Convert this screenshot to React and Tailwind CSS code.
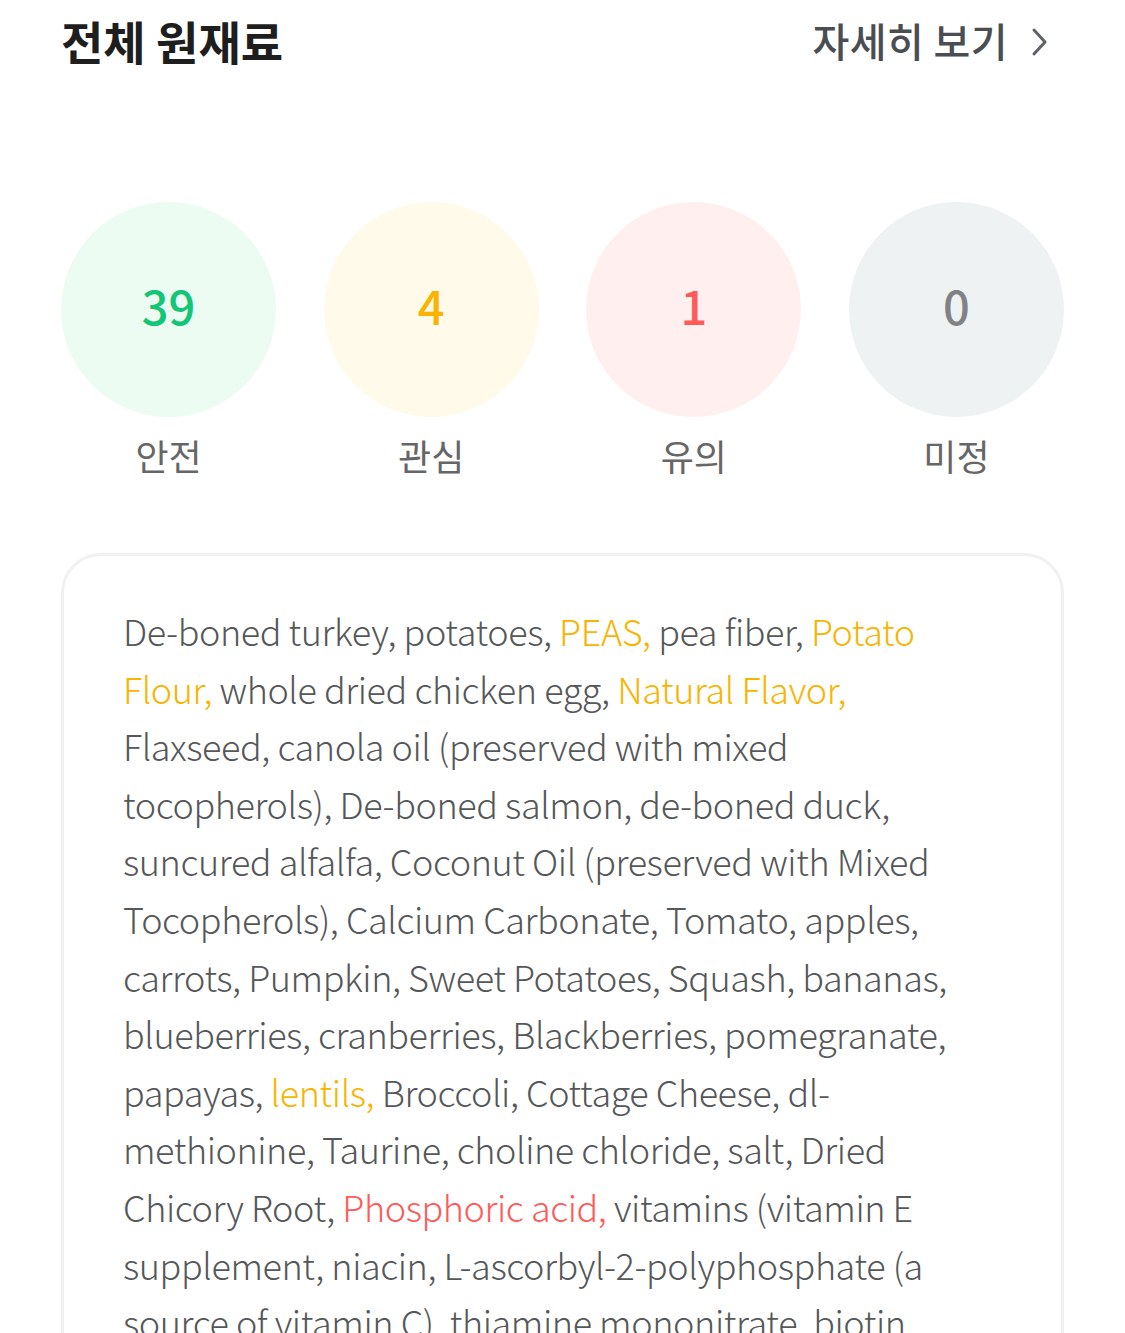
const stats = [
  { count: 39, label: "안전", bg: "bg-[#edfcf3]", fg: "text-[#12c676]" },
  { count: 4, label: "관심", bg: "bg-[#fffaea]", fg: "text-[#f8b400]" },
  { count: 1, label: "유의", bg: "bg-[#fff0ef]", fg: "text-[#ff5a5a]" },
  { count: 0, label: "미정", bg: "bg-[#eff2f3]", fg: "text-[#808285]" },
];

// ingredient text segments, tone decides colour
const ingredients = [
  ["De-boned turkey, potatoes, ", "n"],
  ["PEAS,", "y"],
  [" pea fiber, ", "n"],
  ["Potato Flour,", "y"],
  [" whole dried chicken egg, ", "n"],
  ["Natural Flavor,", "y"],
  [
    " Flaxseed, canola oil (preserved with mixed tocopherols), De-boned salmon, de-boned duck, suncured alfalfa, Coconut Oil (preserved with Mixed Tocopherols), Calcium Carbonate, Tomato, apples, carrots, Pumpkin, Sweet Potatoes, Squash, bananas, blueberries, cranberries, Blackberries, pomegranate, papayas, ",
    "n",
  ],
  ["lentils,", "y"],
  [
    " Broccoli, Cottage Cheese, dl-methionine, Taurine, choline chloride, salt, Dried Chicory Root, ",
    "n",
  ],
  ["Phosphoric acid,", "r"],
  [
    " vitamins (vitamin E supplement, niacin, L-ascorbyl-2-polyphosphate (a source of vitamin C), thiamine mononitrate, biotin, riboflavin, vitamin A supplement, vitamin D3 supplement, folic acid, vitamin B12 supplement)",
    "n",
  ],
];

const tone = { n: "", y: "text-[#f8b400]", r: "text-[#ff5a5a]" };

const App = () => {
  return (
    <div className="min-h-screen bg-white px-[61px] font-['Noto_Sans_CJK_KR','Noto_Sans',sans-serif]">
      {/* header */}
      <div className="flex items-center justify-between pt-[12px]">
        <h1 className="text-[46px] font-bold leading-[56px] text-[#1e1e1e]">
          전체 원재료
        </h1>
        <button className="flex items-center gap-[22px] text-[40px] font-medium leading-[56px] tracking-[0.01em] text-[#4a4e53]">
          자세히 보기
          <svg width="20" height="30" viewBox="0 0 20 30" fill="none" className="mr-[14px] mt-[4px]">
            <path d="M4 3 L15 15 L4 27" stroke="#5f6367" strokeWidth="3" strokeLinecap="round" strokeLinejoin="round" />
          </svg>
        </button>
      </div>

      {/* counts */}
      <div className="mt-[134px] flex justify-between">
        {stats.map((s) => (
          <div key={s.label} className="flex w-[215px] flex-col items-center">
            <div className={`flex h-[215px] w-[215px] items-center justify-center rounded-full pb-[10px] ${s.bg}`}>
              <span className={`text-[47px] font-medium leading-none ${s.fg}`}>{s.count}</span>
            </div>
            <span className="mt-[15px] text-[36px] leading-[46px] text-[#666666]">{s.label}</span>
          </div>
        ))}
      </div>

      {/* ingredient list */}
      <div className="mt-[75px] rounded-[40px] border-[3px] border-[#f1f1f1] pb-[60px] pl-[59px] pt-[46px]">
        <p className="w-[860px] text-[36px] font-light leading-[57.6px] tracking-[-0.012em] text-[#555759]">
          {ingredients.map(([t, k], i) => (
            <span key={i} className={tone[k]}>
              {t}
            </span>
          ))}
        </p>
      </div>
    </div>
  );
};

export default App;
